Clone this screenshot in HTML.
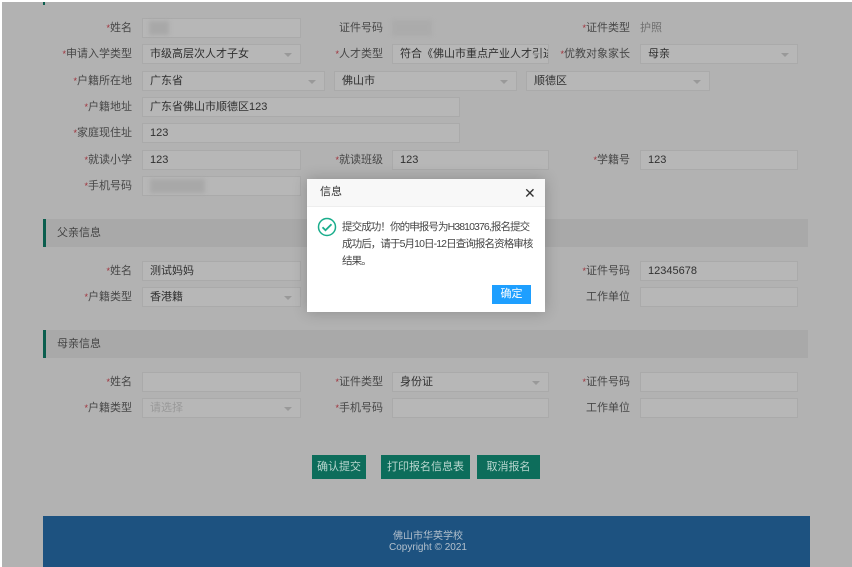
<!DOCTYPE html>
<html><head><meta charset="utf-8"><style>
body{margin:0;width:852px;height:567px;overflow:hidden;background:#fff;font-family:"Liberation Sans","Noto Sans CJK SC",sans-serif;font-size:11px;}
.pg{position:absolute;left:2px;top:2px;width:850px;height:565px;background:#b2b2b2;}
.a{position:absolute}
.l{position:absolute;text-align:right;color:#474747;line-height:20px;white-space:nowrap}
.l i{color:#a0303a;font-style:normal;font-size:9px}
.in{position:absolute;height:20px;background:#b7b7b7;border:1px solid #aaaaaa;box-sizing:border-box;line-height:18px;padding-left:7px;color:#303030;white-space:nowrap;overflow:hidden}
.sel:after{content:"";position:absolute;right:8px;top:8px;border:4px solid transparent;border-top:4px solid #999}
.sec{position:absolute;left:43px;width:765px;height:28px;background:#a9a9a9;border-left:3px solid #0b5e4e;box-sizing:border-box;line-height:28px;padding-left:11px;color:#444}
.btn{position:absolute;top:455px;height:24px;background:#0d6d5b;color:#b9d6cf;line-height:24px;text-align:center;font-size:11px}
.blur{position:absolute;background:#a8a8a8;filter:blur(2px)}
</style></head><body>
<div class="pg"></div>
<div class="a" style="left:43px;top:2px;width:2px;height:3px;background:#0b5e4e"></div>

<div class="l" style="right:720px;top:18px"><i>*</i>姓名</div>
<div class="in" style="left:142px;top:18px;width:159px"></div>
<div class="blur" style="left:149px;top:21px;width:20px;height:14px"></div>
<div class="l" style="right:469px;top:18px">证件号码</div>
<div class="blur" style="left:392px;top:20px;width:40px;height:16px;background:#ababab"></div>
<div class="l" style="right:222px;top:18px"><i>*</i>证件类型</div>
<div class="l" style="left:640px;top:18px;color:#707070">护照</div>

<div class="l" style="right:720px;top:44px"><i>*</i>申请入学类型</div>
<div class="in sel" style="left:142px;top:44px;width:159px">市级高层次人才子女</div>
<div class="l" style="right:469px;top:44px"><i>*</i>人才类型</div>
<div class="in sel" style="left:392px;top:44px;width:157px;padding-right:20px">符合《佛山市重点产业人才引进!</div>
<div class="l" style="right:222px;top:44px"><i>*</i>优教对象家长</div>
<div class="in sel" style="left:640px;top:44px;width:158px">母亲</div>

<div class="l" style="right:720px;top:71px"><i>*</i>户籍所在地</div>
<div class="in sel" style="left:142px;top:71px;width:183px">广东省</div>
<div class="in sel" style="left:334px;top:71px;width:183px">佛山市</div>
<div class="in sel" style="left:526px;top:71px;width:184px">顺德区</div>

<div class="l" style="right:720px;top:97px"><i>*</i>户籍地址</div>
<div class="in" style="left:142px;top:97px;width:318px">广东省佛山市顺德区123</div>
<div class="l" style="right:720px;top:123px"><i>*</i>家庭现住址</div>
<div class="in" style="left:142px;top:123px;width:318px">123</div>

<div class="l" style="right:720px;top:150px"><i>*</i>就读小学</div>
<div class="in" style="left:142px;top:150px;width:159px">123</div>
<div class="l" style="right:469px;top:150px"><i>*</i>就读班级</div>
<div class="in" style="left:392px;top:150px;width:157px">123</div>
<div class="l" style="right:222px;top:150px"><i>*</i>学籍号</div>
<div class="in" style="left:640px;top:150px;width:158px">123</div>

<div class="l" style="right:720px;top:176px"><i>*</i>手机号码</div>
<div class="in" style="left:142px;top:176px;width:159px"></div>
<div class="blur" style="left:150px;top:179px;width:55px;height:14px"></div>

<div class="sec" style="top:219px">父亲信息</div>
<div class="l" style="right:720px;top:261px"><i>*</i>姓名</div>
<div class="in" style="left:142px;top:261px;width:159px">测试妈妈</div>
<div class="l" style="right:222px;top:261px"><i>*</i>证件号码</div>
<div class="in" style="left:640px;top:261px;width:158px">12345678</div>
<div class="l" style="right:720px;top:287px"><i>*</i>户籍类型</div>
<div class="in sel" style="left:142px;top:287px;width:159px">香港籍</div>
<div class="l" style="right:222px;top:287px">工作单位</div>
<div class="in" style="left:640px;top:287px;width:158px"></div>

<div class="sec" style="top:330px">母亲信息</div>
<div class="l" style="right:720px;top:372px"><i>*</i>姓名</div>
<div class="in" style="left:142px;top:372px;width:159px"></div>
<div class="l" style="right:469px;top:372px"><i>*</i>证件类型</div>
<div class="in sel" style="left:392px;top:372px;width:157px">身份证</div>
<div class="l" style="right:222px;top:372px"><i>*</i>证件号码</div>
<div class="in" style="left:640px;top:372px;width:158px"></div>
<div class="l" style="right:720px;top:398px"><i>*</i>户籍类型</div>
<div class="in sel" style="left:142px;top:398px;width:159px;color:#999">请选择</div>
<div class="l" style="right:469px;top:398px"><i>*</i>手机号码</div>
<div class="in" style="left:392px;top:398px;width:157px"></div>
<div class="l" style="right:222px;top:398px">工作单位</div>
<div class="in" style="left:640px;top:398px;width:158px"></div>

<div class="btn" style="left:312px;width:54px">确认提交</div>
<div class="btn" style="left:381px;width:89px">打印报名信息表</div>
<div class="btn" style="left:477px;width:63px">取消报名</div>

<div class="a" style="left:43px;top:516px;width:767px;height:51px;background:#1d5280;color:#b3c0cc;text-align:center;font-size:10px;line-height:11px">
<div style="position:absolute;left:340px;top:15px;width:90px">佛山市华英学校<br>Copyright © 2021</div></div>

<div class="a" style="left:307px;top:179px;width:238px;height:133px;background:#fff;box-shadow:0 0 14px rgba(0,0,0,.22)">
 <div style="height:27px;background:#f8f8f8;border-bottom:1px solid #eee;line-height:27px;padding-left:13px;color:#333;font-size:11px">信息</div>
 <div class="a" style="left:217px;top:6px;font-size:14px;color:#333">✕</div>
 <svg class="a" style="left:10px;top:38px" width="20" height="20" viewBox="0 0 20 20"><circle cx="10" cy="10" r="8.5" fill="none" stroke="#1aad8c" stroke-width="1.5"/><path d="M5.5 10.2l3 3 6-6" fill="none" stroke="#1aad8c" stroke-width="1.8"/></svg>
 <div class="a" style="left:35px;top:40px;width:200px;font-size:10.5px;line-height:17px;color:#444;white-space:nowrap;letter-spacing:-0.9px">提交成功！你的申报号为H3810376,报名提交<br>成功后，请于5月10日-12日查询报名资格审核<br>结果。</div>
 <div class="a" style="left:185px;top:106px;width:39px;height:19px;background:#1e9fff;color:#fff;text-align:center;line-height:19px;font-size:11px">确定</div>
</div>
</body></html>
